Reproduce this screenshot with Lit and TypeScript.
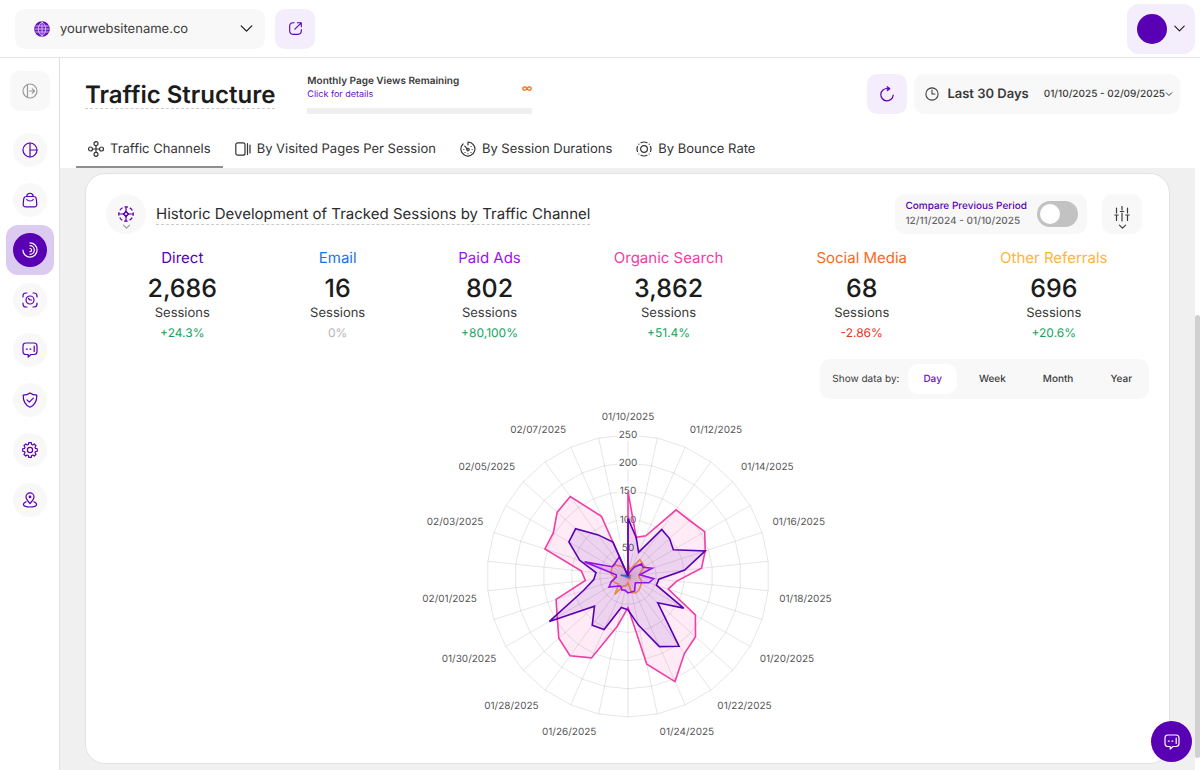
import { LitElement, html, svg, css } from "lit";
import { customElement, state } from "lit/decorators.js";
import { classMap } from "lit/directives/class-map.js";

const CENTER_X = 240;
const CENTER_Y = 172;
const RADIUS = 141;
const LABEL_RADIUS = 152;
const MAX = 250;
const DAYS = 30;

const DATES = [
  "01/10/2025", "01/12/2025", "01/14/2025", "01/16/2025", "01/18/2025",
  "01/20/2025", "01/22/2025", "01/24/2025", "01/26/2025", "01/28/2025",
  "01/30/2025", "02/01/2025", "02/03/2025", "02/05/2025", "02/07/2025",
];

const CHANNELS = [
  {
    name: "Direct", color: "#5a00b4", total: "2,686", change: "+24.3%", trend: "up",
    days: [102, 70, 46, 102, 99, 93, 144, 101, 55, 53, 114, 71, 154, 137, 89, 60, 57, 104, 108, 80, 161, 83, 61, 57, 90, 121, 125, 90, 66, 0],
  },
  {
    name: "Email", color: "#1a73e8", total: "16", change: "0%", trend: "flat",
    days: [0, 0, 2, 1, 0, 1, 2, 1, 0, 0, 1, 0, 0, 1, 0, 1, 0, 0, 0, 1, 0, 1, 2, 13, 1, 0, 0, 1, 0, 0],
  },
  {
    name: "Paid Ads", color: "#9d12ef", total: "802", change: "+80,100%", trend: "up",
    days: [0, 3, 8, 20, 32, 31, 45, 21, 46, 39, 24, 18, 21, 29, 29, 30, 26, 27, 22, 27, 39, 31, 21, 21, 81, 33, 32, 34, 37, 0],
  },
  {
    name: "Organic Search", color: "#f23ca6", total: "3,862", change: "+51.4%", trend: "up",
    days: [150, 70, 78, 145, 147, 157, 144, 131, 87, 75, 138, 161, 170, 205, 160, 56, 91, 159, 175, 165, 145, 134, 76, 83, 155, 153, 169, 174, 116, 0],
  },
  {
    name: "Social Media", color: "#f96a1b", total: "68", change: "-2.86%", trend: "down",
    days: [4, 2, 3, 1, 4, 2, 3, 5, 2, 1, 3, 4, 2, 3, 1, 2, 4, 1, 3, 2, 3, 5, 2, 6, 3, 2, 3, 1, 2, 0],
  },
  {
    name: "Other Referrals", color: "#ffb43c", total: "696", change: "+20.6%", trend: "up",
    days: [25, 12, 16, 36, 34, 34, 24, 20, 20, 25, 27, 29, 32, 33, 30, 12, 18, 19, 40, 22, 25, 29, 23, 30, 31, 33, 29, 22, 16, 0],
  },
];

const PLOT_COLORS: Record<string, string> = { "Other Referrals": "#f59a45" };
const PLOT_ORDER = ["Organic Search", "Other Referrals", "Social Media", "Paid Ads", "Email", "Direct"];

const point = (step: number, r: number) => {
  const a = (step * 2 * Math.PI) / DAYS;
  return { x: CENTER_X + Math.sin(a) * r, y: CENTER_Y - Math.cos(a) * r };
};
const outline = (values: number[]) =>
  values
    .map((v, i) => {
      const p = point(i, (v / MAX) * RADIUS);
      return `${p.x.toFixed(1)},${p.y.toFixed(1)}`;
    })
    .join(" ");

// Eight-toothed cog: each tooth has two outer and two inner corners.
const cog = Array.from({ length: 32 }, (_, i) => {
  const corner = i % 4;
  const r = corner < 2 ? 7.4 : 5.7;
  const a = ((Math.floor(i / 4) * 45 + [-10, 10, 16, 29][corner]) * Math.PI) / 180;
  return `${(8 + r * Math.sin(a)).toFixed(2)},${(8 - r * Math.cos(a)).toFixed(2)}`;
}).join(" ");

const icon = (body: unknown, size = 16) =>
  html`<svg class="icon" width=${size} height=${size} viewBox="0 0 16 16" aria-hidden="true">${body}</svg>`;

const ICONS = {
  globe: svg`<circle cx="8" cy="8" r="7.2" fill="#6f20c8" stroke="#5a00b4"/><path d="M1.5 5h13M.8 8h14.400M1.500 11h13M8 1v14M8 .9c-5 3.600-5 10.600 0 14.200M8 .9c5 3.600 5 10.600 0 14.200" stroke="#e2d0f5" stroke-width=".8"/>`,
  down: svg`<path d="M3 5.500 8 10.500 13 5.500"/>`,
  downBold: svg`<path d="M2.500 5.500 8 11 13.500 5.500" stroke-width="2"/>`,
  external: svg`<path d="M6.500 1.800H5.500Q1.800 1.800 1.800 5.500v5q0 3.700 3.700 3.700h5q3.700 0 3.700-3.700V9M7.300 8.700l6.500-6.500M10 1.800h4.200V6"/>`,
  collapse: svg`<circle cx="8" cy="8" r="7"/><path d="M5.500 1.500v13M7.500 8h5M10.300 5.800 12.500 8l-2.200 2.200"/>`,
  pie: svg`<circle cx="8" cy="8" r="7"/><path d="M8 1v14M8 8h7"/>`,
  bag: svg`<path d="M4.500 4.500h7q2.500 0 2.800 2.500l.5 5q.2 2.800-2.600 2.800H3.800Q1 14.800 1.200 12l.5-5q.3-2.500 2.800-2.500zM4.800 4.300C5 .2 11 .2 11.200 4.300M4.800 7.500c1 2 5.400 2 6.400 0"/>`,
  radar: svg`<path d="M8 .9A7.100 7.100 0 1 1 .9 8M8 3.700a4.300 4.300 0 0 1 0 8.600M8 6.500a1.600 1.600 0 0 1 0 3.200"/>`,
  scan: svg`<path d="M1 5V4q0-3 3-3h1M11 1h1q3 0 3 3v1M15 11v1q0 3-3 3h-1M5 15H4q-3 0-3-3v-1"/><circle cx="8" cy="8" r="4"/><path d="M6.500 6.500 8 8h1.500"/>`,
  chat: svg`<path d="M4 1h8q3 0 3 3v5.500q0 3-3 3H9L6.200 15v-2.500H4q-3 0-3-3V4q0-3 3-3z"/><path d="M12.200 4v5.500M4.300 7.100h1M7.900 7.100h1"/>`,
  shield: svg`<path d="M8 .9q3 2.200 6.800 2.300C14.900 9 13 13 8 15.200 3 13 1.100 9 1.200 3.200 5 3.100 8 .9 8 .9zM5 7.800l2.300 2.300 4-4"/>`,
  gear: svg`<circle cx="8" cy="8" r="2.600"/><polygon points=${cog}/>`,
  pin: svg`<path d="M8 11.500C5.500 8.600 4 7 4 4.900a4 4 0 0 1 8 0C12 7 10.500 8.600 8 11.500zM4.200 9.800C-.5 11.800.8 15 8 15s8.500-3.200 3.800-5.200"/><circle cx="8" cy="4.900" r=".8"/>`,
  refresh: svg`<path d="M8.500 2.500A6.200 6.200 0 1 0 14.200 9"/><path d="M8.500.6 11.200 2.700 8.500 4.800z" fill="#5a00b4" stroke-width=".8"/>`,
  clock: svg`<circle cx="8" cy="8" r="7"/><path d="M8 3.500V8h3.300"/>`,
  nodes: svg`<circle cx="8" cy="2.700" r="2"/><circle cx="8" cy="13.300" r="2"/><circle cx="2.500" cy="8" r="2"/><circle cx="13.500" cy="8" r="2"/><path d="M8 4.700v6.600M4.500 8h7"/>`,
  pages: svg`<rect x=".8" y="1.800" width="9.200" height="12.400" rx="2"/><path d="M12.500 2.500v11M15 4v8"/>`,
  timer: svg`<path d="M8 4V1a7 7 0 1 1-5 2M4.800 5.200 7.200 7.800"/><circle cx="8" cy="8.600" r="1.200"/><path d="M3.800 8.500h.1M12.100 8.500h.1M8 12.500v.1M11 5.500h.1M5 11.500h.1M11 11.500h.1"/>`,
  bounce: svg`<circle cx="8" cy="8" r="3.400"/><path d="M5 1.700a7 7 0 0 1 6 0M14.500 5.500a7 7 0 0 1 0 5M11 14.300a7 7 0 0 1-6 0M1.500 10.500a7 7 0 0 1 0-5M2.800 3.200h.1M13.200 3.200h.1M2.800 13h.1M13.200 13h.1"/>`,
  wheel: svg`<circle cx="8" cy="8" r="7.200" stroke-dasharray="3.700 1.950" stroke-dashoffset="1.850" stroke-linecap="butt"/><path d="M8 1v3.500M8 11.500V15M1 8h3.500M11.500 8H15M8 4.200Q8.400 7.600 11.800 8 8.400 8.400 8 11.800 7.600 8.400 4.200 8 7.600 7.600 8 4.200z" /><path d="M5.500 8 8 5.500 10.500 8 8 10.500z"/>`,
  sliders: svg`<path d="M2.500 2v5M.8 9h3.400M2.500 9v5.500M8 .5v3.500M6.300 5.500h3.400M8 7v8M13.500 2v5M11.800 9h3.400M13.500 9v5.500"/>`,
};

const NAV = [
  { label: "Overview", icon: "pie" },
  { label: "Commerce", icon: "bag" },
  { label: "Traffic", icon: "radar" },
  { label: "Recordings", icon: "scan" },
  { label: "Feedback", icon: "chat" },
  { label: "Privacy", icon: "shield" },
  { label: "Settings", icon: "gear" },
  { label: "Locations", icon: "pin" },
];

const TABS = [
  { label: "Traffic Channels", icon: "nodes" },
  { label: "By Visited Pages Per Session", icon: "pages" },
  { label: "By Session Durations", icon: "timer" },
  { label: "By Bounce Rate", icon: "bounce" },
];

const base = css`
  *, *::before, *::after { box-sizing: border-box; }
  button { font: inherit; color: inherit; border: 0; padding: 0; background: none; cursor: pointer; text-rendering: inherit; }
  a { color: inherit; text-decoration: none; }
  h1, h2, p { margin: 0; font-weight: inherit; }
  .icon { display: block; flex: none; fill: none; stroke: currentColor; stroke-width: 1.2; stroke-linecap: round; stroke-linejoin: round; }
`;

@customElement("radar-chart")
class RadarChart extends LitElement {
  static styles = css`
    :host { display: flex; justify-content: center; }
    svg { display: block; font-family: Inter, sans-serif; font-size: 10px; fill: #555; }
    .grid { fill: none; stroke: #000; stroke-opacity: .1; }
    .backdrop { fill: #fff; fill-opacity: .75; }
    .series { fill-opacity: .1; stroke-width: 1.6; stroke-linejoin: miter; }
    .tick { text-anchor: middle; }
  `;

  render() {
    const steps = Array.from({ length: DAYS }, (_, i) => i);
    const ticks = [50, 100, 150, 200, 250];
    return html`<svg width="480" height="342" viewBox="0 0 480 342" role="img" aria-label="Sessions by traffic channel">
      ${ticks.map((t) => svg`<polygon class="grid" points=${outline(steps.map(() => t))} />`)}
      ${steps.map((i) => {
        const p = point(i, RADIUS);
        return svg`<line class="grid" x1=${CENTER_X} y1=${CENTER_Y} x2=${p.x} y2=${p.y} />`;
      })}
      ${ticks.map((t) => {
        const y = CENTER_Y - (t / MAX) * RADIUS;
        return svg`<rect class="backdrop" x=${CENTER_X - 11} y=${y - 8} width="22" height="14" />
          <text class="tick" x=${CENTER_X} y=${y + 3}>${t}</text>`;
      })}
      ${PLOT_ORDER.map((name) => {
        const c = CHANNELS.find((x) => x.name === name)!;
        const color = PLOT_COLORS[name] ?? c.color;
        return svg`<polygon class="series" fill=${color} stroke=${color} points=${outline(c.days)} />`;
      })}
      ${DATES.map((d, i) => {
        const p = point(i * 2, LABEL_RADIUS);
        const anchor = i === 0 ? "middle" : i < 8 ? "start" : "end";
        const below = p.y > CENTER_Y;
        return svg`<text x=${p.x} y=${p.y + (below ? 10 : -4)} text-anchor=${anchor}>${d}</text>`;
      })}
    </svg>`;
  }
}

@customElement("app-root")
class AppRoot extends LitElement {
  @state() private tab = 0;
  @state() private period = "Day";

  static styles = [
    base,
    css`
      :host { display: flex; flex-direction: column; height: 100vh; overflow: hidden; background: #fff; color: #3a3a3a; font-family: Inter, sans-serif; font-size: 13px; text-rendering: geometricPrecision; }
      .topbar { display: flex; align-items: center; gap: 10px; flex: none; height: 58px; padding: 0 5px 0 15px; border-bottom: 1px solid #e6e6e6; }
      .site { display: flex; align-items: center; width: 250px; height: 40px; padding: 0 10px 0 19px; border-radius: 10px; background: #f8f8f8; font-size: 13px; }
      .site-name { flex: 1; padding-left: 10px; text-align: left; }
      .dark { color: #1c1c1c; }
      .square { display: grid; place-items: center; width: 40px; height: 40px; border-radius: 10px; background: #f4eefc; color: #5a00b4; }
      .account { display: flex; align-items: center; gap: 5px; height: 50px; margin-left: auto; padding: 0 8px 0 10px; border-radius: 12px; background: #f4eefc; color: #1c1c1c; }
      .avatar { width: 30px; height: 30px; border-radius: 50%; background: #5a00b4; }
      .body { display: flex; flex: 1; min-height: 0; }
      .sidebar { display: flex; flex-direction: column; align-items: center; flex: none; width: 60px; padding-top: 13px; border-right: 1px solid #e0e0e0; }
      .collapse { background: #f8f8f8; color: #999; }
      .nav { display: flex; flex-direction: column; padding-top: 14px; }
      .nav-item { display: grid; place-items: center; width: 48px; height: 50px; border-radius: 12px; color: #5a00b4; }
      .nav-dot { display: grid; place-items: center; width: 34px; height: 34px; border-radius: 50%; background: #f8f8f8; }
      .nav-item.active { background: #dccbf1; }
      .nav-item.active .nav-dot { background: #5a00b4; color: #fff; }
      .main { display: flex; flex-direction: column; flex: 1; min-width: 0; background: #f0f0f0; }
      .head { flex: none; background: #fff; }
      .head-row { display: flex; align-items: center; padding: 16px 15px 0 25px; height: 56px; }
      .title { padding-top: 2px; color: #1c1c1c; font-size: 24px; line-height: 27px; font-weight: 600; border-bottom: 1px dashed #ccc; }
      .quota { display: grid; grid-template-columns: 1fr auto; align-items: center; width: 225px; margin-left: 32px; line-height: 14px; }
      .quota-title { font-size: 10px; font-weight: 600; }
      .quota-link { font-size: 9px; color: #6a12c4; }
      .quota-value { grid-row: 1 / 3; grid-column: 2; color: #f97316; font-size: 11px; font-weight: 600; }
      .quota-bar { grid-column: 1 / 3; height: 6px; margin-top: 6px; background: #efefef; }
      .refresh { margin-left: auto; }
      .range { display: flex; align-items: center; height: 40px; margin-left: 7px; padding: 0 7px 0 11px; border-radius: 10px; background: #f8f8f8; }
      .range-name { padding: 0 15px 0 8px; font-size: 13px; line-height: 20px; font-weight: 600; }
      .range-dates { font-size: 10px; font-weight: 500; }
      .tabs { display: flex; padding: 17px 16px 0; }
      .tab { display: flex; align-items: center; gap: 6px; height: 37px; padding: 0 12px; border-bottom: 2px solid transparent; color: #333; }
      .tab.active { border-color: #8e8e8e; }
      .scroller { flex: 1; min-height: 0; overflow: hidden; padding: 5px 25px 0; }
      .card { padding: 20px 20px 17px; border: 1px solid #e2e2e2; border-radius: 20px; background: #fff; }
      .card-head { display: flex; align-items: center; gap: 10px; padding-right: 7px; }
      .widget { display: flex; flex-direction: column; align-items: center; width: 40px; height: 40px; padding-top: 12px; border-radius: 50%; background: #f8f8f8; color: #5a00b4; }
      .widget .icon + .icon { color: #999; }
      .card-title { font-size: 15px; line-height: 20px; border-bottom: 1px dashed #ccc; color: #2c2c2c; }
      .compare { display: flex; align-items: center; gap: 10px; height: 40px; margin-left: auto; padding: 0 9px 0 10px; border-radius: 10px; background: #f8f8f8; font-size: 10px; line-height: 15px; font-weight: 500; }
      .compare-name { display: block; color: #5a00b4; }
      .compare-dates { display: block; color: #666; }
      .switch { appearance: none; display: flex; width: 41px; height: 26px; margin: 0; padding: 3px; border-radius: 13px; background: #c2c2c2; }
      .switch::before { content: ""; width: 20px; height: 20px; border-radius: 50%; background: #fff; }
      .switch:checked { justify-content: flex-end; background: #5a00b4; }
      .tune { display: flex; flex-direction: column; align-items: center; width: 40px; height: 40px; margin-left: 5px; padding-top: 12px; border-radius: 10px; background: #f8f8f8; }
      .stats { display: flex; justify-content: space-around; margin: 11px -5px 0; text-align: center; }
      .stat-name { font-size: 15px; line-height: 26px; }
      .stat-total { font-size: 25px; line-height: 36px; font-weight: 500; color: #1c1c1c; }
      .stat-unit { font-size: 13px; line-height: 12px; }
      .stat-change { margin-top: 8px; font-size: 12px; line-height: 12px; color: #b5b5b5; }
      .stat-change.up { color: #12a562; }
      .stat-change.down { color: #e8341c; }
      .periods { display: flex; align-items: center; gap: 7px; width: max-content; height: 40px; margin: 20px 0 0 auto; padding: 0 2px 0 12px; border-radius: 10px; background: #f8f8f8; font-size: 10px; }
      .periods-label { padding-right: 2px; }
      .period { height: 30px; padding: 0 15px; border-radius: 10px; font-weight: 500; }
      .period.active { background: #fff; color: #6a12c4; }
      .chart { margin-top: 5px; }
      .track { flex: none; width: 5px; padding-top: 257px; background: #fff; }
      .thumb { height: calc(100% - 12px); border-radius: 3px; background: #d0d0d0; }
      .help { position: fixed; right: 8px; bottom: 8px; display: grid; place-items: center; width: 41px; height: 41px; border-radius: 50%; background: #5a00b4; color: #fff; }
    `,
  ];

  render() {
    return html`
      <header class="topbar">
        <button class="site">${icon(ICONS.globe)}<span class="site-name">yourwebsitename.co</span><span class="dark">${icon(ICONS.down, 17)}</span></button>
        <button class="square" aria-label="Open website">${icon(ICONS.external, 15)}</button>
        <button class="account" aria-label="Account"><span class="avatar"></span>${icon(ICONS.down, 15)}</button>
      </header>
      <div class="body">
        <aside class="sidebar">
          <button class="square collapse" aria-label="Expand menu">${icon(ICONS.collapse)}</button>
          <nav class="nav">
            ${NAV.map((n) => html`<a href="#" aria-label=${n.label} class=${classMap({ "nav-item": true, active: n.icon === "radar" })}><span class="nav-dot">${icon(ICONS[n.icon])}</span></a>`)}
          </nav>
        </aside>
        <main class="main">
          <div class="head">
            <div class="head-row">
              <h1 class="title">Traffic Structure</h1>
              <div class="quota">
                <span class="quota-title">Monthly Page Views Remaining</span>
                <a class="quota-link" href="#">Click for details</a>
                <span class="quota-value">∞</span>
                <span class="quota-bar"></span>
              </div>
              <button class="square refresh" aria-label="Refresh">${icon(ICONS.refresh)}</button>
              <button class="range">${icon(ICONS.clock, 14)}<span class="range-name">Last 30 Days</span><span class="range-dates">01/10/2025 - 02/09/2025</span>${icon(ICONS.downBold, 8)}</button>
            </div>
            <div class="tabs" role="tablist">
              ${TABS.map((t, i) => html`<button role="tab" aria-selected=${i === this.tab} class=${classMap({ tab: true, active: i === this.tab })} @click=${() => (this.tab = i)}>${icon(ICONS[t.icon])}${t.label}</button>`)}
            </div>
          </div>
          <div class="scroller">
            <section class="card">
              <div class="card-head">
                <button class="widget" aria-label="Chart type">${icon(ICONS.wheel)}${icon(ICONS.downBold, 9)}</button>
                <h2 class="card-title">Historic Development of Tracked Sessions by Traffic Channel</h2>
                <label class="compare">
                  <span><span class="compare-name">Compare Previous Period</span><span class="compare-dates">12/11/2024 - 01/10/2025</span></span>
                  <input class="switch" type="checkbox" role="switch" />
                </label>
                <button class="tune" aria-label="Adjust">${icon(ICONS.sliders)}${icon(ICONS.downBold, 9)}</button>
              </div>
              <div class="stats">
                ${CHANNELS.map((c) => html`<div>
                  <p class="stat-name" style="color:${c.color}">${c.name}</p>
                  <p class="stat-total">${c.total}</p>
                  <p class="stat-unit">Sessions</p>
                  <p class="stat-change ${c.trend}">${c.change}</p>
                </div>`)}
              </div>
              <div class="periods">
                <span class="periods-label">Show data by:</span>
                ${["Day", "Week", "Month", "Year"].map((p) => html`<button class=${classMap({ period: true, active: p === this.period })} @click=${() => (this.period = p)}>${p}</button>`)}
              </div>
              <radar-chart class="chart"></radar-chart>
            </section>
          </div>
        </main>
        <div class="track"><div class="thumb"></div></div>
      </div>
      <button class="help" aria-label="Chat">${icon(ICONS.chat)}</button>
    `;
  }
}
